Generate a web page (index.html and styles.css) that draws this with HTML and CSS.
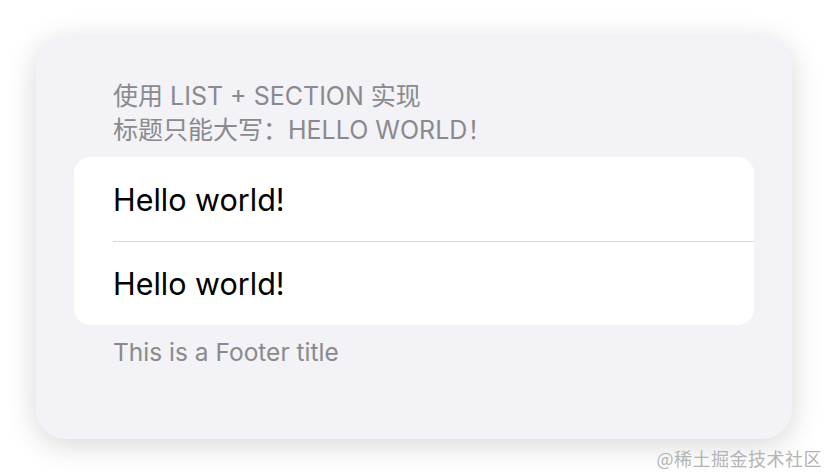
FILE: index.html
```html
<!DOCTYPE html>
<html>

<head>
  <title>List + Section</title>
  <link rel="stylesheet" href="styles.css">
</head>

<body>
  <div class="card">
    <div class="header">
      <div>使用 LIST + SECTION 实现</div>
      <div>标题只能大写：HELLO WORLD！</div>
    </div>
    <ul class="list">
      <li>Hello world!</li>
      <li>Hello world!</li>
    </ul>
    <div class="footer">This is a Footer title</div>
  </div>
  <div class="watermark">@稀土掘金技术社区</div>
</body>

</html>
```

FILE: styles.css
```css
body {
  margin: 0;
  background: #ffffff;
  font-family: Inter, "Noto Sans CJK SC", sans-serif;
  width: 828px;
  height: 476px;
  position: relative;
  overflow: hidden;
}

.card {
  margin: 36px 0 0 36px;
  width: 756px;
  height: 403px;
  box-sizing: border-box;
  padding: 43px 38px 0 38px;
  background: #f2f2f7;
  border-radius: 30px;
  box-shadow: 0 6px 30px rgba(0, 0, 0, 0.16);
  display: flex;
  flex-direction: column;
}

.header {
  padding-left: 39px;
  font-size: 25px;
  line-height: 34px;
  color: #8a8a8e;
  margin-bottom: 10px;
}

.list {
  list-style-type: none;
  margin: 0;
  padding: 0;
  background: #ffffff;
  border-radius: 16px;
  overflow: hidden;
}

.list li {
  height: 84px;
  margin-left: 39px;
  display: flex;
  align-items: center;
  font-size: 30.5px;
  color: #000000;
}

.list li + li {
  border-top: 1px solid #d9d9dd;
  height: 83px;
}

.footer {
  padding-left: 39px;
  margin-top: 10px;
  font-size: 24.5px;
  line-height: 34px;
  color: #8a8a8e;
}

.watermark {
  position: absolute;
  right: 6px;
  top: 446px;
  font-size: 18px;
  line-height: 24px;
  color: #b4b4b4;
  font-family: "Noto Sans CJK SC", sans-serif;
  letter-spacing: 0.5px;
  white-space: nowrap;
}
```
